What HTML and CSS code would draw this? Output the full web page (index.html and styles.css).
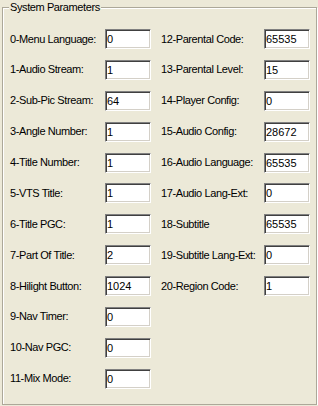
FILE: index.html
```html
<!doctype html>
<html lang="en">
<head>
  <meta charset="utf-8" />
  <title>System Parameters</title>
  <link rel="stylesheet" href="styles.css">
</head>
<body>

<form class="sprm">
  <fieldset>
    <legend>System Parameters</legend>
    <div class="columns">
      <ul class="col col-left">
        <li><label for="sp0">0-Menu Language:</label><input id="sp0" type="text" value="0" /></li>
        <li><label for="sp1">1-Audio Stream:</label><input id="sp1" type="text" value="1" /></li>
        <li><label for="sp2">2-Sub-Pic Stream:</label><input id="sp2" type="text" value="64" /></li>
        <li><label for="sp3">3-Angle Number:</label><input id="sp3" type="text" value="1" /></li>
        <li><label for="sp4">4-Title Number:</label><input id="sp4" type="text" value="1" /></li>
        <li><label for="sp5">5-VTS Title:</label><input id="sp5" type="text" value="1" /></li>
        <li><label for="sp6">6-Title PGC:</label><input id="sp6" type="text" value="1" /></li>
        <li><label for="sp7">7-Part Of Title:</label><input id="sp7" type="text" value="2" /></li>
        <li><label for="sp8">8-Hilight Button:</label><input id="sp8" type="text" value="1024" /></li>
        <li><label for="sp9">9-Nav Timer:</label><input id="sp9" type="text" value="0" /></li>
        <li><label for="sp10">10-Nav PGC:</label><input id="sp10" type="text" value="0" /></li>
        <li><label for="sp11">11-Mix Mode:</label><input id="sp11" type="text" value="0" /></li>
      </ul>
      <ul class="col col-right">
        <li><label for="sp12">12-Parental Code:</label><input id="sp12" type="text" value="65535" /></li>
        <li><label for="sp13">13-Parental Level:</label><input id="sp13" type="text" value="15" /></li>
        <li><label for="sp14">14-Player Config:</label><input id="sp14" type="text" value="0" /></li>
        <li><label for="sp15">15-Audio Config:</label><input id="sp15" type="text" value="28672" /></li>
        <li><label for="sp16">16-Audio Language:</label><input id="sp16" type="text" value="65535" /></li>
        <li><label for="sp17">17-Audio Lang-Ext:</label><input id="sp17" type="text" value="0" /></li>
        <li><label for="sp18">18-Subtitle</label><input id="sp18" type="text" value="65535" /></li>
        <li><label for="sp19">19-Subtitle Lang-Ext:</label><input id="sp19" type="text" value="0" /></li>
        <li><label for="sp20">20-Region Code:</label><input id="sp20" type="text" value="1" /></li>
      </ul>
    </div>
  </fieldset>
</form>

</body>
</html>
```

FILE: styles.css
```css
html,
body {
  margin: 0;
  padding: 0;
  background-color: #ece9d8;
}
body {
  font-family: "Liberation Sans", Arial, sans-serif;
  font-size: 11px;
  line-height: 13px;
  color: #000;
  overflow: hidden;
}
.sprm fieldset {
  box-sizing: border-box;
  width: 315px;
  height: 404px;
  margin: 1px 0 0 2px;
  padding: 15px 0 0 7px;
  border: 1px solid #aca899;
  box-shadow: 1px 1px 0 #fff, inset 1px 1px 0 #fff;
}
.sprm legend {
  margin-left: -1px;
  padding: 0 1px;
  letter-spacing: -0.4px;
  background-color: #ece9d8;
}
.columns {
  display: flex;
  column-gap: 10px;
}
.col {
  display: flex;
  flex-direction: column;
  row-gap: 10.875px;
  list-style: none;
  margin: 0;
  padding: 0;
}
.col li {
  display: grid;
  align-items: center;
  height: 20px;
}
.col-left li {
  grid-template-columns: 95px 46px;
}
.col-right li {
  grid-template-columns: 103px 46px;
}
.col label {
  white-space: nowrap;
  letter-spacing: -0.4px;
}
.col input {
  box-sizing: border-box;
  width: 46px;
  height: 20px;
  margin: 0;
  padding: 0 0 0 1px;
  font-family: inherit;
  font-size: 11px;
  color: #000;
  background-color: #fff;
  border: 1px solid;
  border-color: #808080 #fff #fff #808080;
  box-shadow: inset 1px 1px 0 #404040, inset -1px -1px 0 #d4d0c8;
  border-radius: 0;
  outline: none;
}
```
